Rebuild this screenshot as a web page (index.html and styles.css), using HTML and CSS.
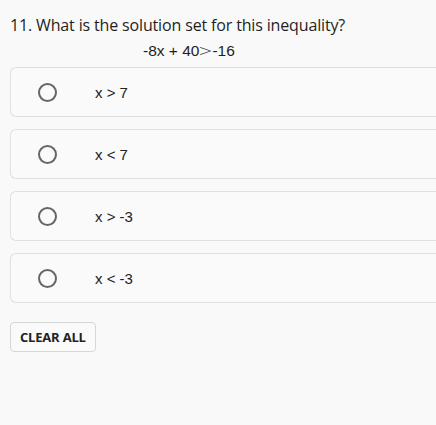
FILE: index.html
```
<!DOCTYPE html>
<html>
<head>
<meta charset="utf-8">
<link rel="stylesheet" href="styles.css">
</head>
<body>
<div class="page">
  <div class="question">11. What is the solution set for this inequality?</div>
  <div class="equation">-8x + 40<span class="gt">&gt;</span>-16</div>
  <div class="options">
    <div class="option"><span class="radio"></span><span class="label">x &gt; 7</span></div>
    <div class="option"><span class="radio"></span><span class="label">x &lt; 7</span></div>
    <div class="option"><span class="radio"></span><span class="label">x &gt; -3</span></div>
    <div class="option"><span class="radio"></span><span class="label">x &lt; -3</span></div>
  </div>
  <button class="clear">CLEAR ALL</button>
</div>
</body>
</html>
```
FILE: styles.css
```
html, body {
  margin: 0;
  padding: 0;
  background: #f9f9f9;
}
.page {
  padding: 14px 0 0 10px;
  font-family: "Open Sans", "Noto Sans", sans-serif;
  color: #1f1f1f;
}
.question {
  font-size: 16px;
  line-height: 22px;
  letter-spacing: -0.15px;
}
.equation {
  font-family: "Liberation Sans", Arial, sans-serif;
  font-size: 15.5px;
  line-height: 20px;
  margin-top: 5px;
  padding-left: 133px;
}
.gt {
  font-family: "DejaVu Sans", sans-serif;
  font-weight: 300;
  display: inline-block;
  transform: scaleX(1.1);
}
.options {
  display: flex;
  flex-direction: column;
  gap: 12px;
  margin-top: 6px;
  margin-right: -10px;
}
.option {
  height: 48px;
  border: 1px solid #e0e0e0;
  border-radius: 6px 0 0 6px;
  border-right: none;
  background: #fafafa;
  display: flex;
  align-items: center;
}
.radio {
  width: 15px;
  height: 15px;
  border: 2px solid #666;
  border-radius: 50%;
  margin-left: 27px;
  flex: none;
}
.label {
  font-family: "Liberation Sans", Arial, sans-serif;
  font-size: 15px;
  margin-left: 38px;
  color: #222;
}
.clear {
  margin-top: 19px;
  height: 30px;
  padding: 0 9px;
  border: 1px solid #d6d6d6;
  border-radius: 4px;
  background: #fafafa;
  font-family: "Open Sans", "Noto Sans", sans-serif;
  font-weight: 700;
  font-size: 13px;
  color: #222;
  letter-spacing: -0.2px;
}
```
